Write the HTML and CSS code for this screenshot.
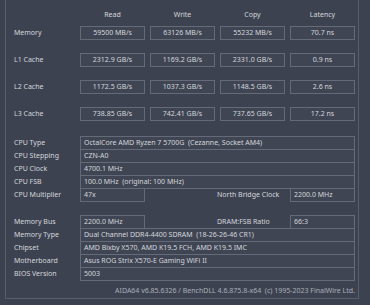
FILE: index.html
```html
<!DOCTYPE html>
<html>

<head>
	<title>AIDA64 Cache &amp; Memory Benchmark</title>
	<link rel="stylesheet" href="styles.css">
</head>

<body>
	<div class="frame">
		<div class="bench">
			<div class="bench-row head">
				<span></span>
				<span>Read</span>
				<span>Write</span>
				<span>Copy</span>
				<span>Latency</span>
			</div>
			<div class="bench-row first">
				<span class="lbl">Memory</span>
				<span class="box">59500 MB/s</span>
				<span class="box">63126 MB/s</span>
				<span class="box">55232 MB/s</span>
				<span class="box">70.7 ns</span>
			</div>
			<div class="bench-row">
				<span class="lbl">L1 Cache</span>
				<span class="box">2312.9 GB/s</span>
				<span class="box">1169.2 GB/s</span>
				<span class="box">2331.0 GB/s</span>
				<span class="box">0.9 ns</span>
			</div>
			<div class="bench-row">
				<span class="lbl">L2 Cache</span>
				<span class="box">1172.5 GB/s</span>
				<span class="box">1037.3 GB/s</span>
				<span class="box">1148.5 GB/s</span>
				<span class="box">2.6 ns</span>
			</div>
			<div class="bench-row">
				<span class="lbl">L3 Cache</span>
				<span class="box">738.85 GB/s</span>
				<span class="box">742.41 GB/s</span>
				<span class="box">737.65 GB/s</span>
				<span class="box">17.2 ns</span>
			</div>
		</div>

		<div class="info">
			<div class="info-row">
				<span class="lbl">CPU Type</span>
				<span class="val wide">OctalCore AMD Ryzen 7 5700G &nbsp;(Cezanne, Socket AM4)</span>
			</div>
			<div class="info-row">
				<span class="lbl">CPU Stepping</span>
				<span class="val wide">CZN-A0</span>
			</div>
			<div class="info-row">
				<span class="lbl">CPU Clock</span>
				<span class="val wide">4700.1 MHz</span>
			</div>
			<div class="info-row">
				<span class="lbl">CPU FSB</span>
				<span class="val wide">100.0 MHz &nbsp;(original: 100 MHz)</span>
			</div>
			<div class="info-row">
				<span class="lbl">CPU Multiplier</span>
				<span class="val">47x</span>
				<span></span>
				<span class="lbl2">North Bridge Clock</span>
				<span class="val">2200.0 MHz</span>
			</div>

			<div class="info-row gap">
				<span class="lbl">Memory Bus</span>
				<span class="val">2200.0 MHz</span>
				<span></span>
				<span class="lbl2">DRAM:FSB Ratio</span>
				<span class="val">66:3</span>
			</div>
			<div class="info-row">
				<span class="lbl">Memory Type</span>
				<span class="val wide">Dual Channel DDR4-4400 SDRAM &nbsp;(18-26-26-46 CR1)</span>
			</div>
			<div class="info-row">
				<span class="lbl">Chipset</span>
				<span class="val wide">AMD Bixby X570, AMD K19.5 FCH, AMD K19.5 IMC</span>
			</div>
			<div class="info-row">
				<span class="lbl">Motherboard</span>
				<span class="val wide">Asus ROG Strix X570-E Gaming WiFi II</span>
			</div>
			<div class="info-row">
				<span class="lbl">BIOS Version</span>
				<span class="val wide">5003</span>
			</div>
		</div>

		<div class="footer">AIDA64 v6.85.6326 / BenchDLL 4.6.875.8-x64 &nbsp;(c) 1995-2023 FinalWire Ltd.</div>
	</div>
</body>

</html>
```

FILE: styles.css
```css
* {
	box-sizing: border-box;
}

body {
	margin: 0;
	background: #3d4250;
	color: #d3d6dc;
	font-family: "Noto Sans", sans-serif;
	font-size: 7px;
	overflow: hidden;
}

.frame {
	margin-left: 5px;
	width: 354px;
	height: 299px;
	border: 1px solid #585e6b;
	border-top: none;
	display: flex;
	flex-direction: column;
}

.bench {
	padding-top: 9px;
}

.bench-row {
	display: grid;
	grid-template-columns: 69px repeat(4, 65px);
	column-gap: 5px;
	height: 14px;
	line-height: 12px;
	margin-top: 13px;
}

.bench-row.head {
	height: 12px;
	margin-top: 0;
	text-align: center;
}

.bench-row.first {
	margin-top: 5px;
}

.lbl {
	padding-left: 8px;
	white-space: nowrap;
}

.lbl2 {
	white-space: nowrap;
}

.box {
	border: 1px solid #646a77;
	background: #404553;
	text-align: center;
	white-space: nowrap;
}

.bench-row .lbl {
	line-height: 14px;
}

.info {
	margin-top: 15px;
}

.info-row {
	display: grid;
	grid-template-columns: 74px 65px 72px 73px 65px;
	grid-template-rows: 13px;
	height: 13px;
	line-height: 14px;
}

.info-row.gap {
	margin-top: 14px;
}

.val {
	height: 14px;
	border: 1px solid #646a77;
	background: #404553;
	padding-left: 3px;
	line-height: 12px;
	white-space: nowrap;
}

.val.wide {
	grid-column: 2 / 6;
}

.footer {
	margin-top: 5px;
	padding-right: 3px;
	height: 12px;
	line-height: 12px;
	text-align: right;
	color: #a9aeb8;
	white-space: nowrap;
}
```
